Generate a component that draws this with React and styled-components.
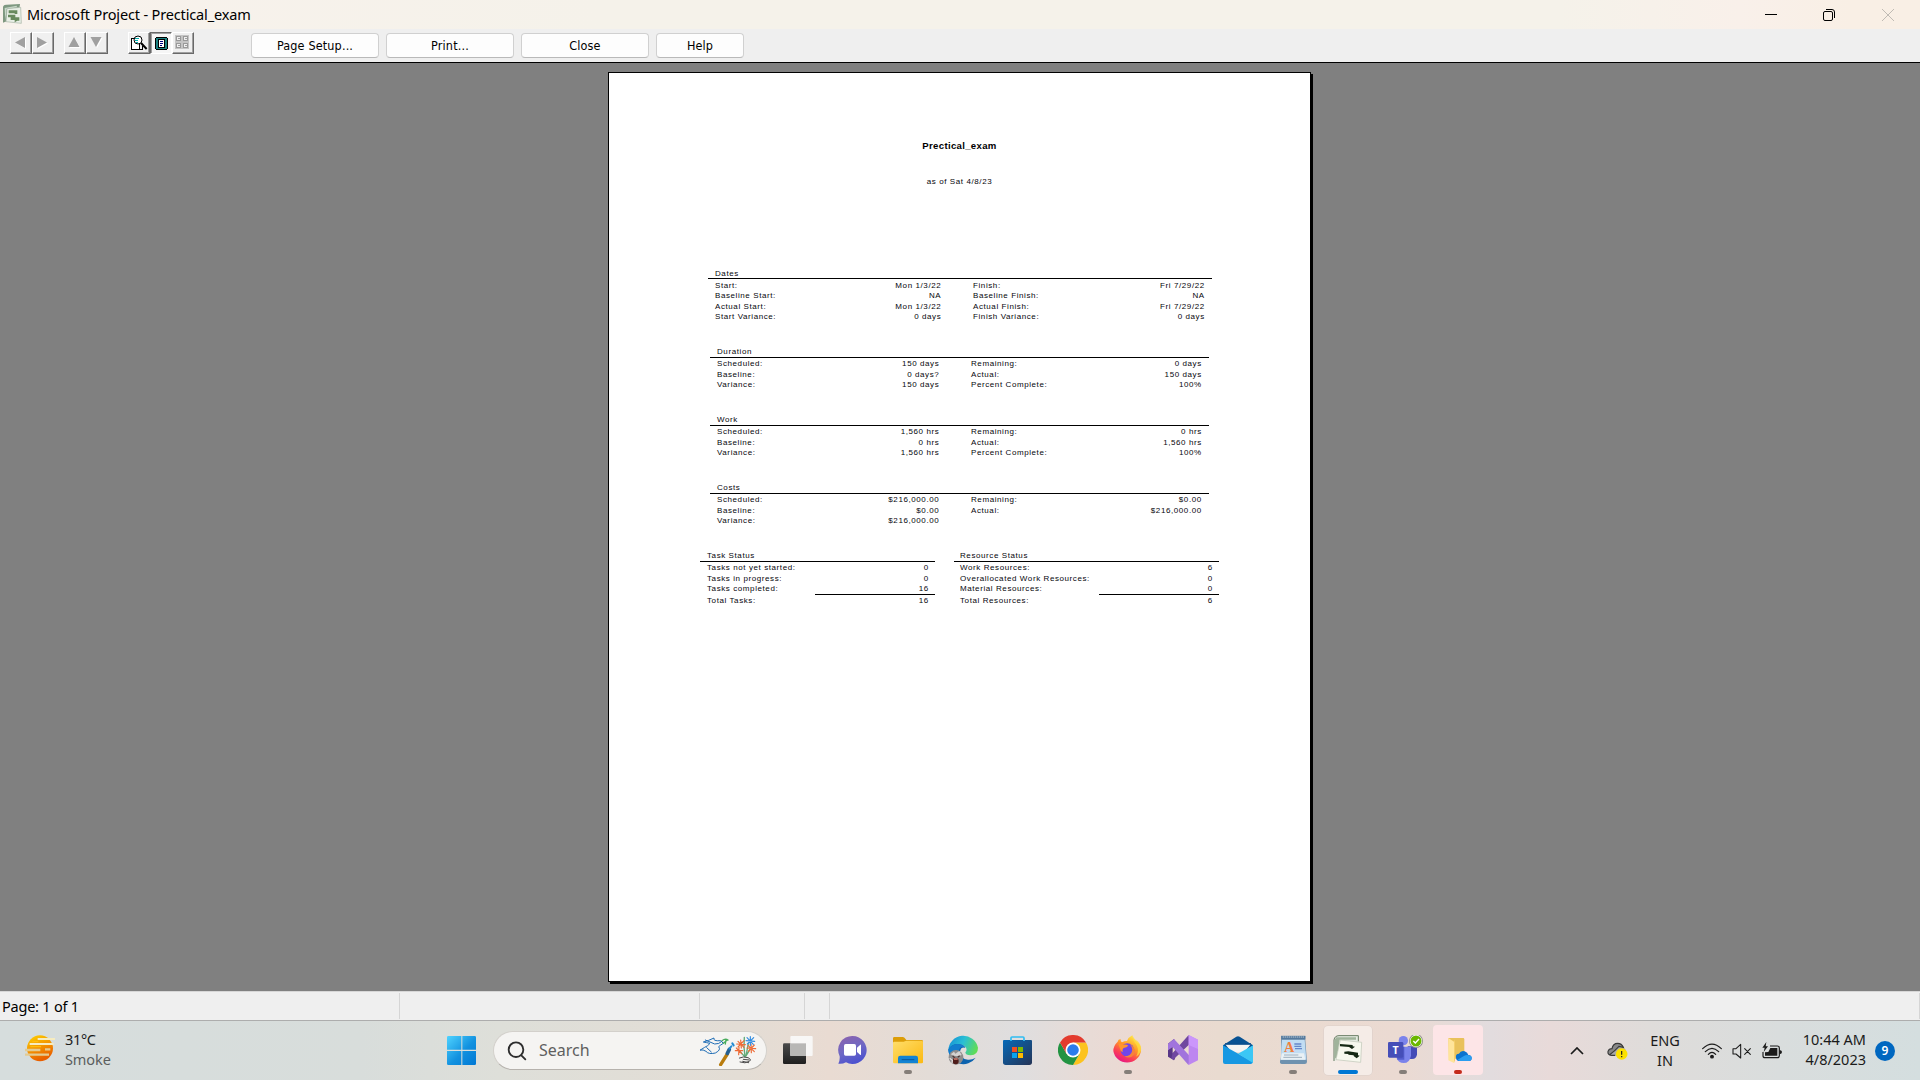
import React from "react";
import styled, { createGlobalStyle } from "styled-components";

const UI = `"Noto Sans", "Open Sans", sans-serif`;
const DIALOG = `"DejaVu Sans Condensed", "DejaVu Sans", sans-serif`;
const PRINT = `"Liberation Sans", Arial, sans-serif`;

const Global = createGlobalStyle`
  * { box-sizing: border-box; }
  html, body { margin: 0; padding: 0; overflow: hidden; }
  svg { display: block; flex: none; }
`;

const Screen = styled.div`
  width: 1920px;
  height: 1080px;
  display: flex;
  flex-direction: column;
  background: #808080;
  color: #000;
  font-family: ${UI};
  overflow: hidden;
`;

/* ---------- title bar ---------- */
const TitleBar = styled.header`
  height: 29px;
  flex: none;
  display: flex;
  align-items: center;
  padding: 0 3px 0 2px;
  background: linear-gradient(90deg, #f8f2ec 0, #f5f2ea 600px, #f5f2ea 1560px, #f9f0ea 1740px, #f9efe5 1850px);
`;
const TitleText = styled.div`
  margin-left: 5px;
  padding-bottom: 2px;
  flex: 1;
  font-size: 14.5px;
  line-height: 26px;
  letter-spacing: ${(p) => p.$ls}px;
  white-space: pre;
`;
const WindowControl = styled.div`
  width: 58.5px;
  height: 29px;
  display: flex;
  align-items: center;
  justify-content: center;
`;

/* ---------- preview toolbar ---------- */
const Toolbar = styled.div`
  height: 34px;
  flex: none;
  display: flex;
  align-items: flex-start;
  background: #efefef;
  border-bottom: 1px solid #000;
  padding-left: 10px;
`;
const ToolGroup = styled.div`
  display: flex;
  margin: 3px ${(p) => p.$after}px 0 0;
`;
const ToolButton = styled.div`
  width: 22px;
  height: 22px;
  background: ${(p) => (p.$pressed ? "#f6f6f6" : "#f0f0f0")};
  border: 1px solid;
  border-color: ${(p) => (p.$pressed ? "#696969 #fff #fff #696969" : "#fff #696969 #696969 #fff")};
  box-shadow: ${(p) => (p.$pressed ? "inset 1px 1px 0 #a0a0a0" : "inset -1px -1px 0 #a0a0a0")};
`;
const PushButton = styled.div`
  width: ${(p) => p.$w}px;
  height: 25px;
  margin: 4px 7px 0 0;
  border: 1px solid #d0d0d0;
  border-bottom-color: #b9b9b9;
  border-radius: 4px;
  background: #fdfdfd;
  font-family: ${DIALOG};
  font-size: 12.5px;
  line-height: 23px;
  letter-spacing: 0.15px;
  text-align: center;
`;

/* ---------- printed page ---------- */
const Preview = styled.main`
  height: 928px;
  flex: none;
  padding: 9px 0 0 608px;
`;
const Sheet = styled.article`
  width: 703px;
  height: 910px;
  border: 1px solid #000;
  background: #fff;
  box-shadow: 2px 2px 0 #000;
  font-family: ${PRINT};
  font-size: 8px;
  color: #06060c;
  letter-spacing: 0.59px;
  white-space: pre;
`;
const ReportTitle = styled.h1`
  margin: 66px 0 0;
  font-size: 9.6px;
  line-height: 14px;
  font-weight: 700;
  letter-spacing: 0.32px;
  color: #000;
  text-align: center;
`;
const ReportDate = styled.div`
  margin-top: 22px;
  line-height: 13px;
  text-align: center;
`;
const Spacer = styled.div`
  height: 79px;
`;
const Section = styled.section`
  width: ${(p) => p.$w}px;
  height: ${(p) => p.$h}px;
  margin-left: ${(p) => p.$x}px;
`;
const SectionTitle = styled.div`
  height: 12px;
  line-height: ${(p) => p.$lh || 12}px;
  padding-left: ${(p) => p.$pad || 7}px;
  border-bottom: 1px solid #000;
`;
const SectionBody = styled.div`
  padding: ${(p) => p.$top ?? 1.2}px ${(p) => p.$right}px 0 ${(p) => p.$left || 7}px;
`;
const Row = styled.div`
  display: grid;
  grid-template-columns: ${(p) => p.$cols};
  height: 10.4px;
  line-height: 10px;
`;
const Value = styled.span`
  text-align: right;
  margin-right: -0.3px;
`;
const IndentedLabel = styled.span`
  padding-left: 32px;
`;
const StatusTables = styled.div`
  display: flex;
  gap: 19px;
  margin-left: 91px;
`;
const Subtotal = styled.div`
  width: 120px;
  height: 1px;
  margin: -0.4px 0 1.2px auto;
  background: #000;
`;

/* ---------- status bar ---------- */
const StatusBar = styled.footer`
  height: 30px;
  flex: none;
  display: flex;
  padding-top: 1px;
  background: #efefef;
  border-top: 1px solid #d7d7d7;
  border-bottom: 1px solid #adadad;
`;
const StatusPane = styled.div`
  width: ${(p) => p.$w}px;
  height: 26px;
  padding-left: 2px;
  border-right: 1px solid #d5d5d5;
  font-size: 14.5px;
  line-height: 26px;
  letter-spacing: -0.22px;
`;

/* ---------- taskbar ---------- */
const Taskbar = styled.nav`
  height: 59px;
  flex: none;
  display: flex;
  background: linear-gradient(90deg, #d6dddd 0, #d8dddb 360px, #dedfd9 500px, #e3ddd5 740px, #e9dbd2 830px,
    #e3dcd7 930px, #dfdedf 1020px, #e8dbd6 1090px, #ecd9d2 1140px, #e9dbd0 1220px, #ebdad2 1400px,
    #e2dcde 1490px, #e8dad9 1550px, #dfdcda 1650px, #d9dddd 1780px, #d4dedf 1920px);
`;
const Weather = styled.div`
  width: 434px;
  display: flex;
  padding: 13px 0 0 25px;
`;
const WeatherText = styled.div`
  margin: -5px 0 0 10px;
  font-size: 14.5px;
  line-height: 20px;
  letter-spacing: -0.35px;
  color: #1b1b1b;
`;
const Muted = styled.div`
  color: #5b5e5e;
  letter-spacing: -0.1px;
`;
const Task = styled.div`
  width: 55px;
  height: 59px;
  display: flex;
  justify-content: center;
`;
const Tile = styled.div`
  width: ${(p) => p.$w || 50}px;
  height: ${(p) => (p.$w === 48 ? 49 : 50)}px;
  margin-top: ${(p) => (p.$w === 48 ? 5 : 4)}px;
  padding-top: ${(p) => (p.$w === 48 ? 9 : 10)}px;
  border-radius: 4px;
  display: flex;
  flex-direction: column;
  align-items: center;
  background: ${(p) => p.$bg || "transparent"};
  box-shadow: ${(p) => (p.$edge ? "0 0 0 0.6px #dccfca" : "none")};
`;
const Indicator = styled.div`
  width: ${(p) => (p.$wide ? 20 : 8)}px;
  height: 4px;
  margin-top: 5px;
  border-radius: 2px;
  background: ${(p) => p.$color};
`;
const Search = styled.div`
  width: 274px;
  height: 39px;
  margin: 10px 3px 0 4px;
  padding: 0 9px 0 13px;
  display: flex;
  align-items: center;
  border-radius: 20px;
  background: #f5f4f2;
  border: 1px solid #d3d0cb;
  border-bottom-color: #b6b2ad;
`;
const SearchText = styled.div`
  flex: 1;
  margin-left: 12px;
  font-size: 16px;
  line-height: 37px;
  color: #5f5f5f;
`;
const Tray = styled.div`
  flex: 1;
  display: flex;
  align-items: center;
  justify-content: flex-end;
  padding-right: 25px;
  color: #1b1b1b;
`;
const TrayText = styled.div`
  width: ${(p) => p.$w}px;
  text-align: ${(p) => p.$align};
  font-size: 14.5px;
  line-height: 20px;
  margin-right: ${(p) => p.$after}px;
  padding-bottom: ${(p) => p.$lift || 0}px;
  white-space: nowrap;
`;
const TrayIcon = styled.div`
  margin-right: ${(p) => p.$after}px;
`;
const Badge = styled.div`
  width: 20px;
  height: 20px;
  border-radius: 50%;
  background: #0067c0;
  color: #fff;
  font-size: 12px;
  font-weight: 600;
  line-height: 19px;
  text-align: center;
`;

/* ---------- report data ---------- */
const blocks = [
  {
    title: "Dates", x: 99, w: 504, h: 79, top: 1.8, first: 226,
    rows: [
      ["Start:", "Mon 1/3/22", "Finish:", "Fri 7/29/22"],
      ["Baseline Start:", "NA", "Baseline Finish:", "NA"],
      ["Actual Start:", "Mon 1/3/22", "Actual Finish:", "Fri 7/29/22"],
      ["Start Variance:", "0 days", "Finish Variance:", "0 days"],
    ],
  },
  {
    title: "Duration", x: 101, w: 499, h: 68, first: 222,
    rows: [
      ["Scheduled:", "150 days", "Remaining:", "0 days"],
      ["Baseline:", "0 days?", "Actual:", "150 days"],
      ["Variance:", "150 days", "Percent Complete:", "100%"],
    ],
  },
  {
    title: "Work", x: 101, w: 499, h: 68, first: 222,
    rows: [
      ["Scheduled:", "1,560 hrs", "Remaining:", "0 hrs"],
      ["Baseline:", "0 hrs", "Actual:", "1,560 hrs"],
      ["Variance:", "1,560 hrs", "Percent Complete:", "100%"],
    ],
  },
  {
    title: "Costs", x: 101, w: 499, h: 68, first: 222,
    rows: [
      ["Scheduled:", "$216,000.00", "Remaining:", "$0.00"],
      ["Baseline:", "$0.00", "Actual:", "$216,000.00"],
      ["Variance:", "$216,000.00", "", ""],
    ],
  },
];

const statusTables = [
  {
    title: "Task Status", w: 235, pad: 7,
    rows: [["Tasks not yet started:", "0"], ["Tasks in progress:", "0"], ["Tasks completed:", "16"]],
    total: ["Total Tasks:", "16"],
  },
  {
    title: "Resource Status", w: 265, pad: 6,
    rows: [["Work Resources:", "6"], ["Overallocated Work Resources:", "0"], ["Material Resources:", "0"]],
    total: ["Total Resources:", "6"],
  },
];

function Block({ b }) {
  return (
    <Section $w={b.w} $h={b.h} $x={b.x}>
      <SectionTitle $lh={b.title === "Dates" ? 13 : 12}>{b.title}</SectionTitle>
      <SectionBody $top={b.top} $right={7.5}>
        {b.rows.map((r, i) => (
          <Row key={i} $cols={`100px ${b.first - 100}px 1fr 90px`}>
            <span>{r[0]}</span>
            <Value>{r[1]}</Value>
            <IndentedLabel>{r[2]}</IndentedLabel>
            <Value>{r[3]}</Value>
          </Row>
        ))}
      </SectionBody>
    </Section>
  );
}

function StatusTable({ t }) {
  return (
    <Section $w={t.w} $h={60} $x={0}>
      <SectionTitle $pad={t.pad}>{t.title}</SectionTitle>
      <SectionBody $left={t.pad} $right={6.5}>
        {t.rows.map((r) => (
          <Row key={r[0]} $cols="1fr 40px"><span>{r[0]}</span><Value>{r[1]}</Value></Row>
        ))}
      </SectionBody>
      <Subtotal />
      <SectionBody $left={t.pad} $right={6.5} $top={0}>
        <Row $cols="1fr 40px"><span>{t.total[0]}</span><Value>{t.total[1]}</Value></Row>
      </SectionBody>
    </Section>
  );
}

/* ---------- icons ---------- */
const Arrow = ({ d }) => (
  <svg width="20" height="20" viewBox="0 0 20 20"><path d={d} fill="#fff" transform="translate(1 1)" /><path d={d} fill="#a0a0a0" /></svg>
);

const ProjectSmall = () => (
  <svg width="20" height="21" viewBox="0 0 60 63">
    <path d="M3 8 Q5 1 14 2 L54 0 L52 14 L18 14 L14 52 L3 56Z" fill="#7f9880" />
    <path d="M8 12 L44 5 L45 10 L14 16 L10 48Z" fill="#c9d8c8" />
    <path d="M15 14 L56 10 L58 58 L12 53Z" fill="#e9efe6" stroke="#a4b2a3" strokeWidth="2" />
    <path d="M20 19 H46 V30 H38 V28 H20Z M18 32 H40 V40 H52 V50 H46 L38 55 V48 H26 V40 H18Z" fill="#688a5e" />
  </svg>
);

const ZoomIcon = () => (
  <svg width="20" height="20" viewBox="0 0 60 60" shapeRendering="crispEdges">
    <path d="M8 16 H30 V50 H8Z" fill="#fff" stroke="#000" strokeWidth="3" />
    <path d="M28 50 H40 V40" fill="none" stroke="#000" strokeWidth="3" />
    <circle cx="27" cy="21" r="12" fill="#fff" stroke="#000" strokeWidth="3" shapeRendering="auto" />
    <path d="M19 15 H30 M17 21 H27 M20 27 H27" stroke="#00b0b0" strokeWidth="3" />
    <path d="M36 30 L53 48" stroke="#000" strokeWidth="6" shapeRendering="auto" />
  </svg>
);
const OnePageIcon = () => (
  <svg width="20" height="20" viewBox="0 0 20 20" shapeRendering="crispEdges">
    <path d="M5 4H16V5H17V16H16V17H5V16H4V5H5Z" fill="#000" />
    <rect x="5" y="5" width="11" height="11" fill="#1a8080" />
    <rect x="7" y="6" width="7" height="9" fill="#000" />
    <rect x="8" y="7" width="5" height="7" fill="#fff" />
    <path d="M9 8.5h3M9 10.5h3M9 12.5h2" stroke="#000080" />
  </svg>
);
const MultiPageIcon = () => (
  <svg width="20" height="20" viewBox="0 0 20 20" shapeRendering="crispEdges">
    <path d="M2 2H16V16H2Z" fill="#c4c4c4" />
    {[3, 10].map((x) => [3, 10].map((y) => (
      <path key={`${x}-${y}`} d={`M${x}.5 ${y}.5h4v4h-4z`} fill="#eee" stroke="#999" />
    )))}
    <path d="M5 5.5h2M5 12.5h2M12 5.5h2M12 12.5h2" stroke="#a0a0a0" />
  </svg>
);

const Sun = () => (
  <svg width="30" height="28" viewBox="0 0 90 84">
    <defs><linearGradient id="sun" x1="0" y1="0" x2="0.4" y2="1"><stop stopColor="#ffd400" /><stop offset="1" stopColor="#e95f00" /></linearGradient></defs>
    <circle cx="45" cy="43" r="39" fill="url(#sun)" />
    <path d="M38 15 H90 M14 30 H86" stroke="#f6ecc0" strokeWidth="6" />
    <path d="M0 48 H46 M60 46 H76 M0 62 H72" stroke="#e3cb92" strokeWidth="7" />
    <path d="M22 23 H40 M16 38 H48" stroke="#ffbd0c" strokeWidth="4" />
  </svg>
);

const Windows = () => (
  <svg width="30" height="30" viewBox="0 0 90 90">
    <defs><linearGradient id="win" x1="0" y1="0" x2="1" y2="1"><stop stopColor="#4fd3ff" /><stop offset=".55" stopColor="#1291df" /><stop offset="1" stopColor="#0078d4" /></linearGradient></defs>
    <path d="M4 3H43V44H0V7Q0 3 4 3ZM46 3H83Q87 3 87 7V44H46ZM0 48H43V90H4Q0 90 0 86ZM46 48H87V86Q87 90 83 90H46Z" fill="url(#win)" />
  </svg>
);
const Magnifier = () => (
  <svg width="20" height="20" viewBox="0 0 60 60" fill="none" stroke="#2d2d2d" strokeWidth="5.5" strokeLinecap="round">
    <circle cx="27" cy="26" r="22" /><path d="M43 43 L55 55" />
  </svg>
);

const Doodle = () => (
  <svg width="57" height="30" viewBox="0 0 171 90" fill="none" strokeLinecap="round">
    <g stroke="#1f6db5" strokeWidth="3">
      <path d="M1 42 L14 34 Q24 30 30 22 Q20 20 10 18 Q26 14 42 6 Q38 16 62 14 L70 22 Q60 28 56 32 Q64 42 46 51 Q26 56 18 46 Q10 40 1 42Z" />
      <path d="M16 12 L44 24 Q56 26 68 14 M20 35 L34 48" />
    </g>
    <path d="M66 14 Q76 6 84 12 M70 22 L82 12 M76 24 L78 10" stroke="#49ac5c" strokeWidth="4" />
    <path d="M62 86 L82 54" stroke="#b97c0e" strokeWidth="10" />
    <path d="M82 52 L88 40" stroke="#255f91" strokeWidth="11" />
    <path d="M88 38 L94 31 M97 22 L101 28" stroke="#248bd4" strokeWidth="6" />
    <g stroke="#62aa78" strokeWidth="4"><path d="M135 62 Q130 34 133 4 M138 60 L145 22 M138 60 L150 40 M134 62 L120 46" /></g>
    <g stroke="#ee6b36" strokeWidth="3.5">
      <path d="M110 24 L136 26 M122 12 L124 36 M114 16 L132 34 M132 14 L114 33" />
      <path d="M141 36 L167 38 M153 24 L154 50 M144 28 L163 47 M163 27 L145 46" />
      <path d="M106 44 L128 44 M117 34 L116 56 M109 36 L125 53" />
    </g>
    <path d="M138 14 L164 16 M151 2 L151 28 M141 5 L160 25 M161 5 L142 24" stroke="#318ce0" strokeWidth="3.5" />
    <path d="M118 66 Q130 60 144 65 Q156 70 148 76 Q136 84 120 78 M130 70 L148 72 M128 76 L146 80" stroke="#4d4d4d" strokeWidth="3" />
  </svg>
);

const TaskView = () => (
  <svg width="30" height="30" viewBox="0 0 90 90">
    <defs><linearGradient id="tv" x1="0" y1="0" x2="0" y2="1"><stop stopColor="#4b4b4b" /><stop offset="1" stopColor="#1f1f1f" /></linearGradient></defs>
    <rect x="0" y="25" width="69" height="62" rx="4" fill="url(#tv)" />
    <rect x="22" y="3" width="67" height="60" rx="3" fill="#f8f7f6" />
    <path d="M22 25H69V63H22Z" fill="#b8b7b5" />
  </svg>
);
const Chat = () => (
  <svg width="30" height="30" viewBox="0 0 90 90">
    <defs><linearGradient id="chat" x1=".2" y1="0" x2=".6" y2="1"><stop stopColor="#8a62ae" /><stop offset=".5" stopColor="#6f68c4" /><stop offset="1" stopColor="#4a50d0" /></linearGradient></defs>
    <path d="M44 3 A42 42 0 1 1 24 82 Q12 88 1 86 Q6 76 5 64 A42 42 0 0 1 44 3Z" fill="url(#chat)" />
    <rect x="18" y="27" width="36" height="35" rx="5" fill="#fff" />
    <path d="M57 38 L67 29 Q69 28 69 31 V58 Q69 61 67 60 L57 51Z" fill="#fff" />
  </svg>
);
const Explorer = () => (
  <svg width="30" height="30" viewBox="0 0 90 90">
    <defs><linearGradient id="ex" x1="0" y1="0" x2="1" y2="1"><stop stopColor="#ffde6b" /><stop offset="1" stopColor="#fbb911" /></linearGradient></defs>
    <path d="M0 10 Q0 6 4 6 H30 Q34 6 40 15 H86 Q90 15 90 19 V40 H0Z" fill="#dc9d08" />
    <path d="M0 24 Q0 20 4 20 H32 L40 17 H86 Q90 17 90 21 V82 Q90 85 86 85 H4 Q0 85 0 81Z" fill="url(#ex)" />
    <path d="M15 85 V69 Q15 62 22 62 H68 Q75 62 75 69 V85Z" fill="#1283d3" />
    <path d="M26 74 H64" stroke="#0a579b" strokeWidth="3" />
  </svg>
);
const Edge = () => (
  <svg width="30" height="30" viewBox="0 0 90 90">
    <defs><linearGradient id="edgeTop" x1="0" y1=".2" x2="1" y2=".5"><stop stopColor="#1591d6" /><stop offset=".5" stopColor="#2bbfd4" /><stop offset="1" stopColor="#5fdc57" /></linearGradient></defs>
    <path d="M1 46 A45 45 0 0 1 90 38 Q90 60 68 61 Q52 61 52 52 Q58 46 54 38 Q44 24 26 30 Q8 34 1 46Z" fill="url(#edgeTop)" />
    <path d="M1 44 Q10 26 32 27 Q50 30 52 38 Q38 34 36 50 Q36 72 60 74 Q72 75 83 68 A45 45 0 0 1 1 44Z" fill="#0d63ae" />
    <path d="M1 44 Q14 24 36 28 Q48 30 50 37 Q36 32 32 48 L12 70 Q1 58 1 44Z" fill="#127dce" />
    <circle cx="24" cy="67" r="22" fill="#8f8d8d" />
    <path d="M8 58 L18 50 L22 56 L34 48 L41 60 L30 64 L18 62Z" fill="#d4d2d1" />
    <path d="M14 63 L20 68 M29 67 L35 62" stroke="#4a3434" strokeWidth="4" />
    <ellipse cx="23" cy="78" rx="9" ry="10" fill="#4f1d1b" /><path d="M18 72 H29" stroke="#e99686" strokeWidth="4" />
    <path d="M5 70 L13 76 L12 84" stroke="#e1dddd" strokeWidth="4" fill="none" />
  </svg>
);
const Store = () => (
  <svg width="30" height="30" viewBox="0 0 90 90">
    <defs><linearGradient id="st" x1="0" y1="0" x2="1" y2="1"><stop stopColor="#0669b8" /><stop offset="1" stopColor="#243456" /></linearGradient></defs>
    <path d="M0 17 Q0 15 3 15 H84 Q87 15 87 18 V82 Q87 90 79 90 H8 Q0 90 0 82Z" fill="url(#st)" />
    <path d="M24 18 V9 Q24 6 27 6 H60 Q63 6 63 9 V18" fill="none" stroke="#30bdf2" strokeWidth="5" />
    <path d="M27 36H42V51H27Z" fill="#f15021" /><path d="M45 36H60V51H45Z" fill="#7eb900" />
    <path d="M27 54H42V69H27Z" fill="#08a3ee" /><path d="M45 54H60V69H45Z" fill="#ffb900" />
  </svg>
);
const Chrome = () => (
  <svg width="30" height="30" viewBox="0 0 90 90">
    <path d="M45 22.5 H84 A45 45 0 0 1 45 90 L64.5 56Z" fill="#fcc31e" />
    <path d="M6 22.5 A45 45 0 0 0 45 90 L64.5 56 L45 60 L25.5 56Z" fill="#229342" />
    <path d="M6 22.5 A45 45 0 0 1 84 22.5 H45 L25.5 56Z" fill="#e33b2e" />
    <circle cx="45" cy="45" r="22.5" fill="#fff" /><circle cx="45" cy="45" r="17.5" fill="#2b7cec" />
  </svg>
);
const Firefox = () => (
  <svg width="30" height="30" viewBox="0 0 90 90">
    <defs><linearGradient id="ff" x1=".8" y1="0" x2=".25" y2="1"><stop stopColor="#fff04a" /><stop offset=".4" stopColor="#ff9d25" /><stop offset=".72" stopColor="#fb4055" /><stop offset="1" stopColor="#e4108b" /></linearGradient></defs>
    <path d="M14 20 Q16 12 23 13 Q22 20 27 22 Q34 18 42 18 Q47 6 58 1 Q59 13 70 20 Q86 30 84 48 A42 41 0 0 1 1 48 Q1 32 14 20Z" fill="url(#ff)" />
    <circle cx="43" cy="45" r="20" fill="#7146e8" />
    <path d="M16 26 Q24 24 31 29 Q40 27 46 32 Q41 38 32 39 Q26 44 30 52 Q21 48 20 38Z" fill="#ff962d" />
    <path d="M55 31 Q72 43 63 59 Q52 73 34 64 Q54 64 57 49 Q60 39 50 27Z" fill="#f6833a" />
    <path d="M58 1 Q58 17 70 29 Q80 46 69 65 Q87 54 84 36 Q79 20 68 15 Q62 10 58 1Z" fill="#ffdc3e" opacity=".8" />
  </svg>
);
const VisualStudio = () => (
  <svg width="30" height="30" viewBox="0 0 90 90">
    <path d="M0 26 L18 12 L22 20 L14 36 V54 L22 68 L18 76 L0 65Z" fill="#583686" />
    <path d="M14 54 L62 0 L66 26 L20 70 L18 76 L10 70Z" fill="#70479f" />
    <path d="M0 26 L18 12 L66 64 L62 90Q60 88 58 86 L14 36 L0 46Z" fill="#a174dd" />
    <path d="M62 0 L90 14 V76 L62 90Z" fill="#bd86f0" />
    <path d="M62 0 L90 14 V42 L62 30Z" fill="#cb96fb" />
  </svg>
);
const Mail = () => (
  <svg width="30" height="30" viewBox="0 0 90 90">
    <path d="M0 31 L40 5 Q45 2 50 5 L90 31 V50 H0Z" fill="#075293" />
    <path d="M6 27 H84 L64 52 H26Z" fill="#f5f4f2" />
    <path d="M6 27 H84" stroke="#0a4f8d" strokeWidth="5" />
    <path d="M0 31 L90 81 Q88 87 83 87 H6 Q0 87 0 81Z" fill="#1698e2" />
    <path d="M90 31 L45 56 L90 84Z" fill="#3bc7f5" />
  </svg>
);
const WordPad = () => (
  <svg width="30" height="30" viewBox="0 0 90 90">
    <path d="M9 2 H82 V16 L87 80 Q87 87 80 87 H12 Q5 87 6 79 L10 62Z" fill="#6f92af" />
    <path d="M12 14 H80 L85 74 H8Z" fill="#c1ddf3" />
    <path d="M10 3 H82 V13 H10Z" fill="#54799d" />
    <path d="M14 6 H78" stroke="#b8c9d5" strokeWidth="3" strokeDasharray="4 2" />
    <path d="M12 55 H78 L82 74 H8Z" fill="#e9f1f5" />
    <text x="18" y="51" fontFamily="Liberation Serif, serif" fontWeight="700" fontSize="43" fill="#f1803e">A</text>
    <path d="M49 27 H70 M49 34 H70 M51 41 H72" stroke="#6687ca" strokeWidth="4" />
    <path d="M18 60 H61 M16 67 H72" stroke="#9eb0bf" strokeWidth="3" />
  </svg>
);
const ProjectIcon = () => (
  <svg width="30" height="30" viewBox="0 0 90 90">
    <path d="M2 79 L4 14 Q6 2 18 1 H77 V24 H20 L12 76Z" fill="#e6ece3" />
    <path d="M3 78 V15 Q5 2 18 2 H76 V19" fill="none" stroke="#667960" strokeWidth="3" />
    <path d="M10 7 H69 V14 H20 L12 65 L4 73 V16Z" fill="#a0b39b" />
    <path d="M22 15 L86 22 L83 82 L9 74Z" fill="#f7f8ee" stroke="#bdc4b5" strokeWidth="2" />
    <path d="M21 27 L59 30 V34 L66 35 L57 42 L49 37 V36 L21 34Z M46 49 L75 53 V61 L80 62 L71 70 L62 63 V61 L46 59 V57 L34 56 V50Z" fill="#152814" />
  </svg>
);
const Teams = () => (
  <svg width="35" height="30" viewBox="0 0 105 90">
    <circle cx="46" cy="17" r="14" fill="#7b83eb" />
    <path d="M59 34 H87 V58 Q86 72 72 72 H60Z" fill="#444bb7" />
    <path d="M26 35 H69 V62 Q65 84 47 84 Q31 84 26 70Z" fill="#7b83eb" />
    <path d="M26 35 H49 V74 H28Z" fill="#545ccc" />
    <rect x="0" y="21" width="46" height="47" rx="4" fill="#464eb8" />
    <text x="23" y="56" textAnchor="middle" fontFamily="Noto Sans, sans-serif" fontWeight="700" fontSize="32" fill="#fff">T</text>
    <circle cx="84" cy="18" r="21" fill="#8d8b8a" /><circle cx="84" cy="18" r="18.5" fill="#fff" /><circle cx="84" cy="18" r="16.5" fill="#6bb700" />
    <path d="M76 18 L82 24 L93 12" fill="none" stroke="#fff" strokeWidth="4" />
  </svg>
);
const CloudFolder = () => (
  <svg width="30" height="30" viewBox="0 0 90 90">
    <path d="M16 9 H62 L64 12 V71 H18Z" fill="#e9c15b" />
    <path d="M16 9 L33 20 V84 L16 76Z" fill="#ffe49a" />
    <path d="M33 20 L36 13 V76 L33 84Z" fill="#f5cf6b" />
    <path d="M39 68 Q37 56 48 56 Q53 46 65 49 Q74 52 76 60 Q87 61 86 71 Q85 78 76 78 H50 Q40 78 39 68Z" fill="#0a72cf" />
    <path d="M44 74 L64 62 Q70 59 78 61 Q88 63 86 71 Q85 78 76 78 H50 Q46 78 44 74Z" fill="#2a9df0" />
  </svg>
);
const TeamsSlot = styled.div`
  width: 30px;
  height: 30px;
`;

const tasks = [
  { icon: <TaskView /> },
  { icon: <Chat /> },
  { icon: <Explorer />, dot: "#857e79" },
  { icon: <Edge /> },
  { icon: <Store /> },
  { icon: <Chrome /> },
  { icon: <Firefox />, dot: "#857e79" },
  { icon: <VisualStudio /> },
  { icon: <Mail /> },
  { icon: <WordPad />, dot: "#857e79" },
  { icon: <ProjectIcon />, dot: "#0078d4", wide: true, w: 48, bg: "#f5ece7", edge: true },
  { icon: <TeamsSlot><Teams /></TeamsSlot>, dot: "#857e79" },
  { icon: <CloudFolder />, dot: "#c42b1c", bg: "#fde5e7" },
];

const CloudWarn = () => (
  <svg width="21" height="18" viewBox="0 0 63 54">
    <path d="M6 39 Q-1 26 14 20 Q18 4 32 5 Q46 5 48 17 Q58 20 57 32 L50 42 H14 Q8 42 6 39Z" fill="#a9aaaa" />
    <path d="M24 40 H14 Q1 39 3 28 Q6 20 15 20 Q18 4 32 4 Q44 4 49 16 L36 13 Q22 28 8 38" fill="#898989" stroke="#3a3a3a" strokeWidth="3.5" />
    <circle cx="44" cy="36" r="17.5" fill="#fce100" />
    <path d="M44 27 V38 M44 42 V46" stroke="#222" strokeWidth="3.6" />
  </svg>
);
const Wifi = () => (
  <svg width="20" height="16" viewBox="0 0 60 48" fill="none" stroke="#1b1b1b" strokeWidth="3.6" strokeLinecap="round">
    <path d="M2 17 Q30 -10 58 17 M10 26 Q30 6 50 26 M19 34 Q30 22 41 34" /><circle cx="30" cy="41" r="4" fill="#1b1b1b" />
  </svg>
);
const SpeakerMuted = () => (
  <svg width="20" height="16" viewBox="0 0 60 48" fill="none" stroke="#1b1b1b" strokeWidth="3.2" strokeLinejoin="round" strokeLinecap="round">
    <path d="M3 17 H12 L26 4 V45 L12 33 H3Z M38 17 L55 34 M55 17 L38 34" />
  </svg>
);
const Battery = () => (
  <svg width="20" height="17" viewBox="0 0 60 51">
    <path d="M24 12 H46 Q52 12 52 18 V41 Q52 47 46 47 H9 Q3 47 3 41 V30" fill="none" stroke="#1b1b1b" strokeWidth="3.5" />
    <path d="M25 18 H46 V41 H9 V31 L19 30Z" fill="#1b1b1b" /><path d="M53 24 Q60 25 60 30 Q60 36 53 37Z" fill="#1b1b1b" />
    <path d="M13 0 L1 17 H8 L5 30 L18 13 H11Z" fill="#1b1b1b" />
  </svg>
);

export default function App() {
  return (
    <Screen>
      <Global />
      <TitleBar>
        <ProjectSmall />
        <TitleText $ls={-0.15}>Microsoft Project - Prectical_exam</TitleText>
        <WindowControl><svg width="12" height="12"><path d="M0 5.5H12" stroke="#000" /></svg></WindowControl>
        <WindowControl>
          <svg width="12" height="12" fill="none" stroke="#000">
            <rect x=".5" y="2.5" width="9" height="9" rx="1.5" /><path d="M3 .5H9Q11.5 .5 11.5 3V9" />
          </svg>
        </WindowControl>
        <WindowControl><svg width="12" height="12"><path d="M0 0L12 12M12 0L0 12" stroke="#c0bbb4" /></svg></WindowControl>
      </TitleBar>

      <Toolbar>
        <ToolGroup $after={10}>
          <ToolButton><Arrow d="M4 9.5 L14 4 V15Z" /></ToolButton>
          <ToolButton><Arrow d="M14 9.5 L4 4 V15Z" /></ToolButton>
        </ToolGroup>
        <ToolGroup $after={20}>
          <ToolButton><Arrow d="M9 4 L14.5 14 H3.5Z" /></ToolButton>
          <ToolButton><Arrow d="M9 14 L14.5 4 H3.5Z" /></ToolButton>
        </ToolGroup>
        <ToolGroup $after={57}>
          <ToolButton><ZoomIcon /></ToolButton>
          <ToolButton $pressed><OnePageIcon /></ToolButton>
          <ToolButton><MultiPageIcon /></ToolButton>
        </ToolGroup>
        <PushButton $w={128}>Page Setup...</PushButton>
        <PushButton $w={128}>Print...</PushButton>
        <PushButton $w={128}>Close</PushButton>
        <PushButton $w={88}>Help</PushButton>
      </Toolbar>

      <Preview>
        <Sheet>
          <ReportTitle>Prectical_exam</ReportTitle>
          <ReportDate>as of Sat 4/8/23</ReportDate>
          <Spacer />
          {blocks.map((b) => <Block key={b.title} b={b} />)}
          <StatusTables>
            {statusTables.map((t) => <StatusTable key={t.title} t={t} />)}
          </StatusTables>
        </Sheet>
      </Preview>

      <StatusBar>
        <StatusPane $w={400}>Page: 1 of 1</StatusPane>
        <StatusPane $w={300} />
        <StatusPane $w={105} />
        <StatusPane $w={25} />
        <StatusPane $w={1090} />
      </StatusBar>

      <Taskbar>
        <Weather>
          <Sun />
          <WeatherText>
            <div>31°C</div>
            <Muted>Smoke</Muted>
          </WeatherText>
        </Weather>
        <Task><Tile><Windows /></Tile></Task>
        <Search>
          <Magnifier />
          <SearchText>Search</SearchText>
          <Doodle />
        </Search>
        {tasks.map((t, i) => (
          <Task key={i}>
            <Tile $w={t.w} $bg={t.bg} $edge={t.edge}>
              {t.icon}
              {t.dot && <Indicator $color={t.dot} $wide={t.wide} />}
            </Tile>
          </Task>
        ))}
        <Tray>
          <TrayIcon $after={23}>
            <svg width="14" height="8" fill="none" stroke="#1b1b1b" strokeWidth="1.7"><path d="M1 7L7 1L13 7" /></svg>
          </TrayIcon>
          <TrayIcon $after={18}><CloudWarn /></TrayIcon>
          <TrayText $w={38} $align="center" $after={18} $lift={2}>ENG<br />IN</TrayText>
          <TrayIcon $after={10}><Wifi /></TrayIcon>
          <TrayIcon $after={10}><SpeakerMuted /></TrayIcon>
          <TrayIcon $after={4}><Battery /></TrayIcon>
          <TrayText $w={80} $align="right" $after={9} $lift={4}>10:44 AM<br />4/8/2023</TrayText>
          <Badge>9</Badge>
        </Tray>
      </Taskbar>
    </Screen>
  );
}
